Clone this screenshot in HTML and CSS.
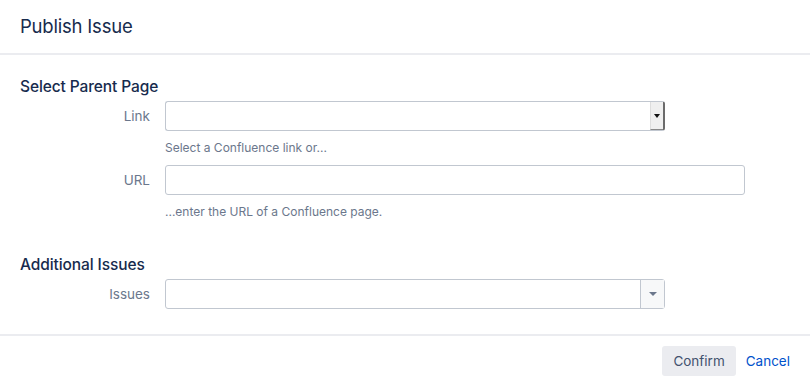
FILE: index.html
```html
<!DOCTYPE html>
<html lang="en">
<head>
    <meta charset="UTF-8">
    <title>Publish Issue</title>
    <link rel="stylesheet" href="styles.css">
</head>
<body>
    <div class="dialog">
        <header class="dialog-header">
            <h2>Publish Issue</h2>
        </header>
        <div class="dialog-content">
            <h3>Select Parent Page</h3>
            <div class="field">
                <label>Link</label>
                <div class="control">
                    <div class="native-select">
                        <span class="native-arrow"></span>
                    </div>
                    <div class="description">Select a Confluence link or...</div>
                </div>
            </div>
            <div class="field">
                <label>URL</label>
                <div class="control">
                    <input type="text" class="text long">
                    <div class="description">...enter the URL of a Confluence page.</div>
                </div>
            </div>

            <h3 class="section-gap">Additional Issues</h3>
            <div class="field">
                <label>Issues</label>
                <div class="control">
                    <div class="picker">
                        <span class="picker-arrow"><b></b></span>
                    </div>
                </div>
            </div>
        </div>
        <footer class="dialog-footer">
            <button class="button">Confirm</button>
            <a href="#" class="cancel">Cancel</a>
        </footer>
    </div>
</body>
</html>
```

FILE: styles.css
```css
body {
    margin: 0;
    background-color: #fff;
    font-family: Inter, "Noto Sans", sans-serif;
    color: #172b4d;
}
.dialog {
    width: 810px;
    height: 385px;
    display: flex;
    flex-direction: column;
}
.dialog-header {
    height: 53px;
    padding: 0 20px;
    display: flex;
    align-items: center;
    border-bottom: 2px solid #ebecf0;
}
.dialog-header h2 {
    margin: 0 0 1px;
    font-size: 18.5px;
    font-weight: 400;
    letter-spacing: -0.2px;
}
.dialog-content {
    flex: 1;
    padding: 23px 20px 0;
}
h3 {
    margin: 0 0 5px;
    font-size: 15.5px;
    font-weight: 500;
    line-height: 18px;
    letter-spacing: -0.1px;
}
.section-gap {
    margin-top: 36px;
}
.field {
    display: flex;
    margin-bottom: 9px;
}
.field label {
    width: 130px;
    padding-right: 15px;
    text-align: right;
    font-size: 13.5px;
    line-height: 30px;
    color: #6b778c;
}
.control {
    display: flex;
    flex-direction: column;
}
.description {
    margin-top: 9px;
    font-size: 12px;
    line-height: 16px;
    color: #6b778c;
}
.native-select {
    width: 500px;
    height: 30px;
    box-sizing: border-box;
    border: 1px solid #c1c7d0;
    border-right: 2px solid #6b6b6b;
    border-radius: 3px;
    display: flex;
    justify-content: flex-end;
}
.native-arrow {
    width: 12px;
    border-left: 1px solid #ddd;
    background: #efefef;
    display: flex;
    align-items: center;
    justify-content: center;
    border-bottom: 1px solid #888;
}
.native-arrow::after {
    content: "";
    border-left: 3px solid transparent;
    border-right: 3px solid transparent;
    border-top: 4px solid #111;
}
.text {
    height: 30px;
    box-sizing: border-box;
    border: 1px solid #c1c7d0;
    border-radius: 3px;
    margin: 0;
    padding: 0 6px;
    font: inherit;
}
.long {
    width: 580px;
}
.picker {
    width: 500px;
    height: 30px;
    box-sizing: border-box;
    border: 1px solid #c1c7d0;
    border-radius: 3px;
    display: flex;
    justify-content: flex-end;
}
.picker-arrow {
    width: 23px;
    border-left: 1px solid #c1c7d0;
    background: #f7f8f9;
    display: flex;
    align-items: center;
    justify-content: center;
}
.picker-arrow b {
    border-left: 4px solid transparent;
    border-right: 4px solid transparent;
    border-top: 4px solid #6b778c;
}
.dialog-footer {
    height: 49px;
    border-top: 2px solid #ebecf0;
    display: flex;
    align-items: center;
    justify-content: flex-end;
    padding: 0 20px;
    gap: 10px;
}
.button {
    height: 30px;
    padding: 0 11px;
    border: none;
    border-radius: 3px;
    background: #ebecf0;
    color: #42526e;
    font: inherit;
    font-size: 13.5px;
}
.cancel {
    color: #0052cc;
    text-decoration: none;
    font-size: 13.5px;
}
```
